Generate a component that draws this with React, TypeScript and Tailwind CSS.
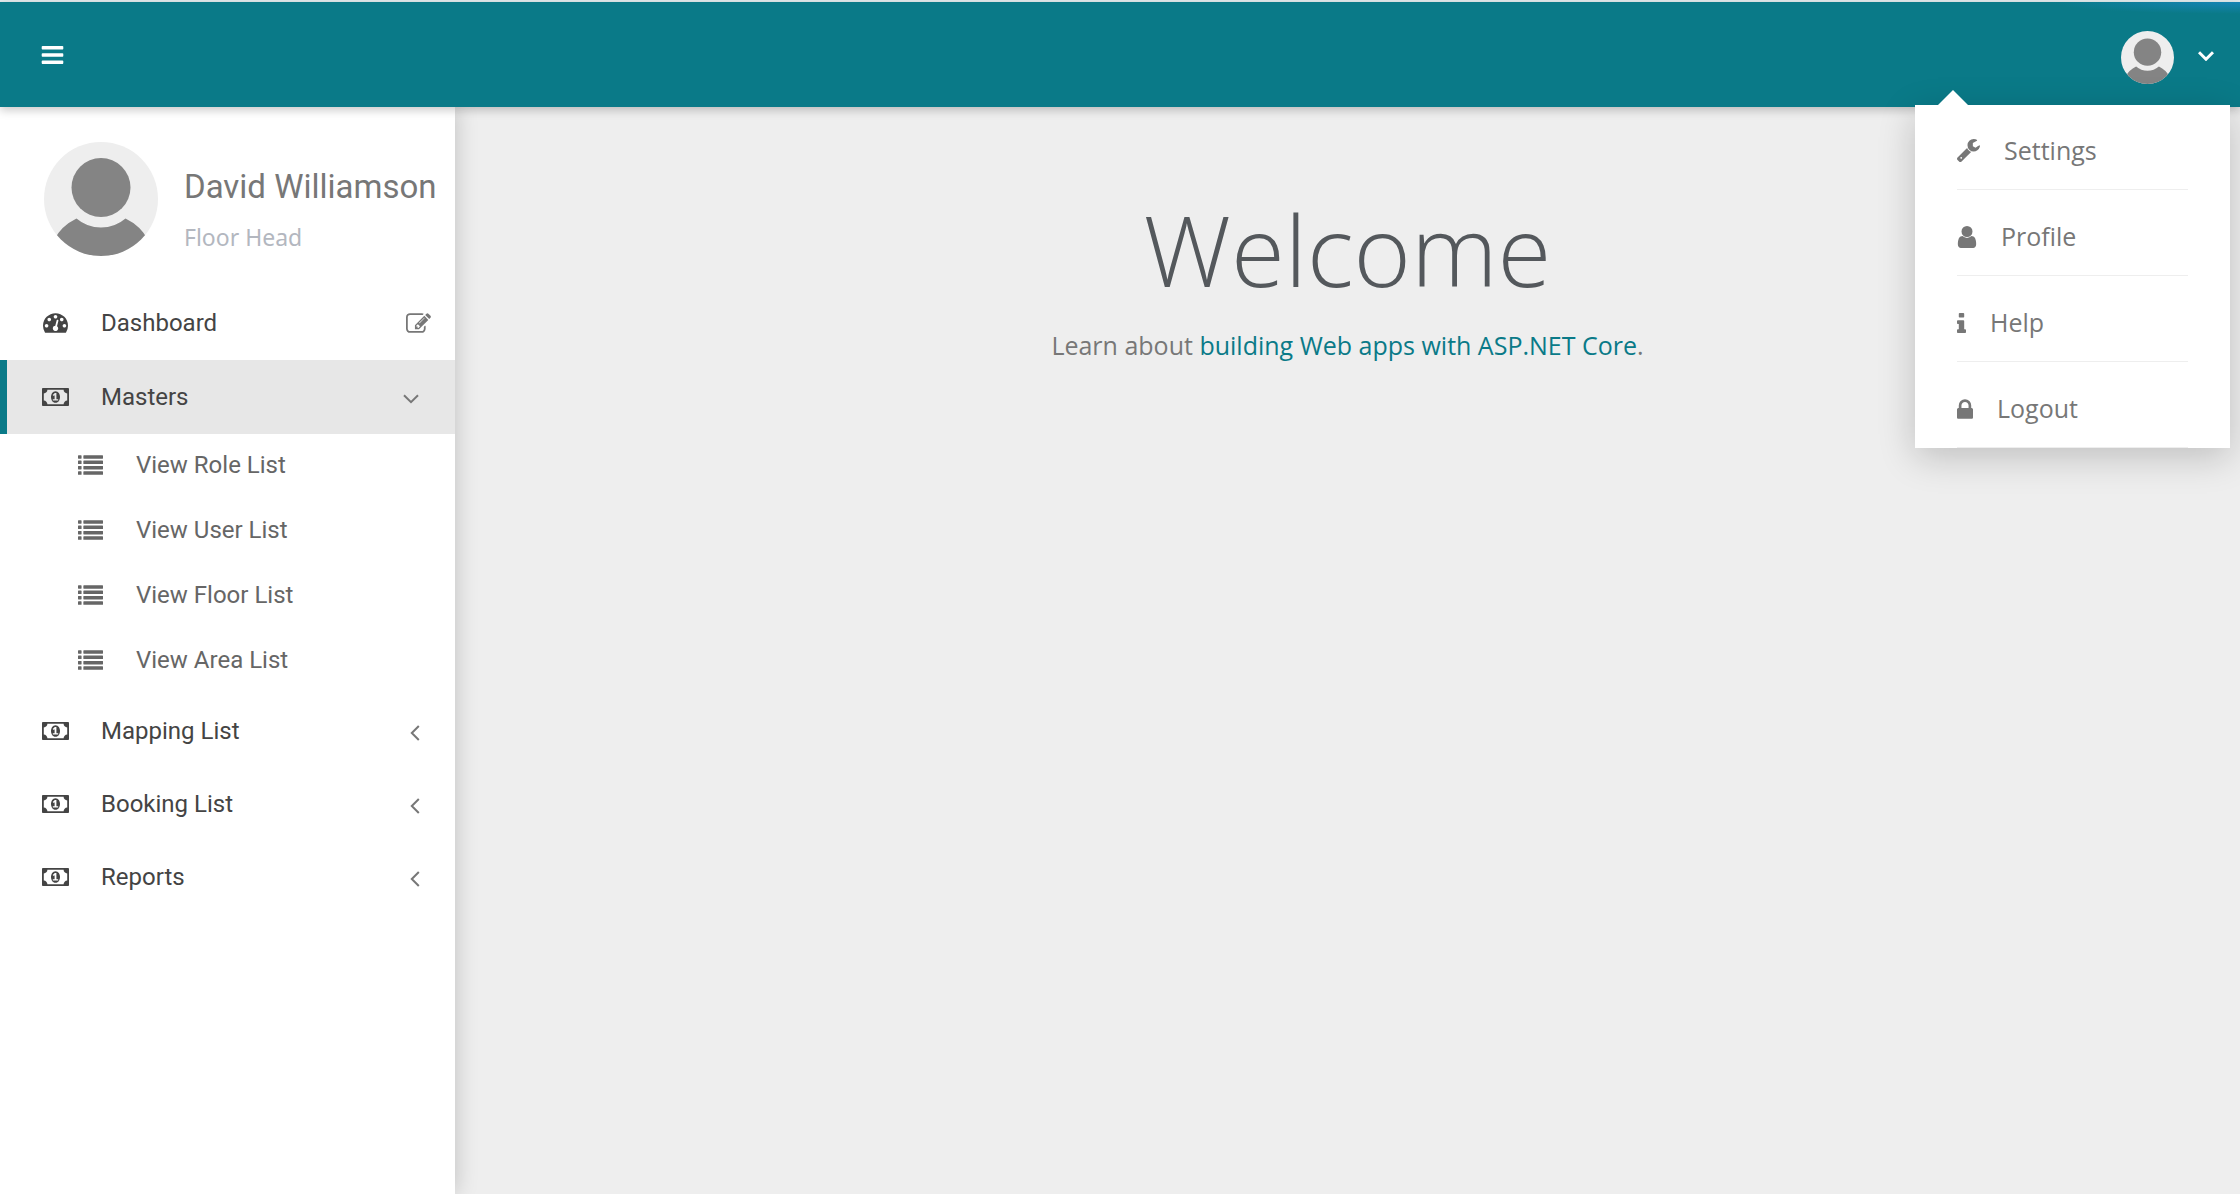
import React from "react";

type Glyph = { d: string; box: string };

const GLYPHS = {
  bars: {
    box: "128 256 1536 1280",
    d: "M1664 1344v128q0 26-19 45t-45 19h-1408q-26 0-45-19t-19-45v-128q0-26 19-45t45-19h1408q26 0 45 19t19 45zm0-512v128q0 26-19 45t-45 19h-1408q-26 0-45-19t-19-45v-128q0-26 19-45t45-19h1408q26 0 45 19t19 45zm0-512v128q0 26-19 45t-45 19h-1408q-26 0-45-19t-19-45v-128q0-26 19-45t45-19h1408q26 0 45 19t19 45z",
  },
  gauge: {
    box: "0 256 1792 1408",
    d: "M384 1152q0-53-37.5-90.5t-90.5-37.5-90.5 37.5-37.5 90.5 37.5 90.5 90.5 37.5 90.5-37.5 37.5-90.5zm192-448q0-53-37.5-90.5t-90.5-37.5-90.5 37.5-37.5 90.5 37.5 90.5 90.5 37.5 90.5-37.5 37.5-90.5zm428 481l101-382q6-26-7.5-48.5t-38.5-29.5-48 6.5-30 39.5l-101 382q-60 5-107 43.5t-63 98.5q-20 77 20 146t117 89 146-20 89-117q16-60-6-117t-72-91zm660-33q0-53-37.5-90.5t-90.5-37.5-90.5 37.5-37.5 90.5 37.5 90.5 90.5 37.5 90.5-37.5 37.5-90.5zm-640-640q0-53-37.5-90.5t-90.5-37.5-90.5 37.5-37.5 90.5 37.5 90.5 90.5 37.5 90.5-37.5 37.5-90.5zm448 192q0-53-37.5-90.5t-90.5-37.5-90.5 37.5-37.5 90.5 37.5 90.5 90.5 37.5 90.5-37.5 37.5-90.5zm320 448q0 261-141 483-19 29-54 29h-1402q-35 0-54-29-141-221-141-483 0-182 71-348t191-286 286-191 348-71 348 71 286 191 191 286 71 348z",
  },
  money: {
    box: "0 256 1920 1280",
    d: "M768 1152h384v-96h-128v-448h-114l-148 137 77 80q42-37 55-57h2v288h-128v96zm512-256q0 70-21 142t-59.5 134-101.5 101-138 39-138-39-101.5-101-59.5-134-21-142 21-142 59.5-134 101.5-101 138-39 138 39 101.5 101 59.5 134 21 142zm512 256v-512q-106 0-181-75t-75-181h-1152q0 106-75 181t-181 75v512q106 0 181 75t75 181h1152q0-106 75-181t181-75zm128-832v1152q0 26-19 45t-45 19h-1792q-26 0-45-19t-19-45v-1152q0-26 19-45t45-19h1792q26 0 45 19t19 45z",
  },
  list: {
    box: "0 128 1792 1408",
    d: "M32 128h192q32 0 32 32v192q0 32-32 32h-192q-32 0-32-32v-192q0-32 32-32zM416 128h1344q32 0 32 32v192q0 32-32 32h-1344q-32 0-32-32v-192q0-32 32-32zM32 512h192q32 0 32 32v192q0 32-32 32h-192q-32 0-32-32v-192q0-32 32-32zM416 512h1344q32 0 32 32v192q0 32-32 32h-1344q-32 0-32-32v-192q0-32 32-32zM32 896h192q32 0 32 32v192q0 32-32 32h-192q-32 0-32-32v-192q0-32 32-32zM416 896h1344q32 0 32 32v192q0 32-32 32h-1344q-32 0-32-32v-192q0-32 32-32zM32 1280h192q32 0 32 32v192q0 32-32 32h-192q-32 0-32-32v-192q0-32 32-32zM416 1280h1344q32 0 32 32v192q0 32-32 32h-1344q-32 0-32-32v-192q0-32 32-32z",
  },
  edit: {
    box: "0 128 1792 1408",
    d: "M888 1184l116-116-152-152-116 116v56h96v96h56zm440-720q-16-16-33 1l-350 350q-17 17-1 33t33-1l350-350q17-17 1-33zm80 594v190q0 119-84.5 203.5t-203.5 84.5h-832q-119 0-203.5-84.5t-84.5-203.5v-832q0-119 84.5-203.5t203.5-84.5h832q63 0 117 25 15 7 18 23 3 17-9 29l-49 49q-14 14-32 8-23-6-45-6h-832q-66 0-113 47t-47 113v832q0 66 47 113t113 47h832q66 0 113-47t47-113v-126q0-13 9-22l64-64q15-15 35-7t20 29zm-96-738l288 288-672 672h-288v-288zm444 132l-92 92-288-288 92-92q28-28 68-28t68 28l152 152q28 28 28 68t-28 68z",
  },
  wrench: {
    box: "85 128 1641 1643",
    d: "M448 1472q0-26-19-45t-45-19-45 19-19 45 19 45 45 19 45-19 19-45zm644-420l-682 682q-37 37-90 37-52 0-91-37l-106-108q-38-36-38-90 0-53 38-91l681-681q39 98 114.5 173.5t173.5 114.5zm634-435q0 39-23 106-47 134-164.5 217.5t-258.5 83.5q-185 0-316.5-131.5t-131.5-316.5 131.5-316.5 316.5-131.5q58 0 121.5 16.5t107.5 46.5q16 11 16 28t-16 28l-293 169v224l193 107q5-3 79-48.5t135.5-81 70.5-35.5q15 0 23.5 10t8.5 25z",
  },
  user: {
    box: "256 128 1280 1536",
    d: "M1536 1399q0 109-62.5 187t-150.5 78h-854q-88 0-150.5-78t-62.5-187q0-85 8.5-160.5t31.5-152 58.5-131 94-89 134.5-34.5q131 128 313 128t313-128q76 0 134.5 34.5t94 89 58.5 131 31.5 152 8.5 160.5zm-256-887q0 159-112.5 271.5t-271.5 112.5-271.5-112.5-112.5-271.5 112.5-271.5 271.5-112.5 271.5 112.5 112.5 271.5z",
  },
  info: {
    box: "576 128 640 1408",
    d: "M1216 1344v128q0 26-19 45t-45 19h-512q-26 0-45-19t-19-45v-128q0-26 19-45t45-19h64v-384h-64q-26 0-45-19t-19-45v-128q0-26 19-45t45-19h384q26 0 45 19t19 45v576h64q26 0 45 19t19 45zm-128-1152v192q0 26-19 45t-45 19h-256q-26 0-45-19t-19-45v-192q0-26 19-45t45-19h256q26 0 45 19t19 45z",
  },
  lock: {
    box: "320 128 1152 1408",
    d: "M640 768h512v-192q0-106-75-181t-181-75-181 75-75 181v192zm832 96v576q0 40-28 68t-68 28h-960q-40 0-68-28t-28-68v-576q0-40 28-68t68-28h32v-192q0-184 132-316t316-132 316 132 132 316v192h32q40 0 68 28t28 68z",
  },
} satisfies Record<string, Glyph>;

function Icon({ name, className }: { name: keyof typeof GLYPHS; className: string }) {
  const g = GLYPHS[name];
  return (
    <svg viewBox={g.box} className={`shrink-0 fill-current ${className}`} aria-hidden="true">
      <path d={g.d} />
    </svg>
  );
}

function Angle({ open, className }: { open: boolean; className: string }) {
  return (
    <svg
      viewBox={open ? "0 0 16 10" : "0 0 10 16"}
      className={`shrink-0 fill-none stroke-current ${open ? "h-[10px] w-[16px]" : "h-[16px] w-[10px]"} ${className}`}
      aria-hidden="true"
    >
      <path d={open ? "M1 1.2L8 8.2L15 1.2" : "M8.8 1L1.8 8L8.8 15"} />
    </svg>
  );
}

function Avatar({ id, className }: { id: string; className: string }) {
  return (
    <svg viewBox="0 0 114 114" className={`shrink-0 ${className}`} role="img" aria-label="User avatar">
      <clipPath id={id}>
        <circle cx="57" cy="57" r="57" />
      </clipPath>
      <circle cx="57" cy="57" r="57" fill="#eeeeee" />
      <circle cx="57" cy="45.5" r="29.5" fill="#848484" />
      <path
        clipPath={`url(#${id})`}
        fill="#848484"
        d="M10 98Q17 84 32.500 76.500Q43 85.500 57 85.500Q71 85.500 81.500 76.500Q97 84 104 98V114H10Z"
      />
    </svg>
  );
}

const SUB_ITEMS = ["View Role List", "View User List", "View Floor List", "View Area List"];
const GROUPS = ["Mapping List", "Booking List", "Reports"];
const MENU: { label: string; icon: keyof typeof GLYPHS; size: string }[] = [
  { label: "Settings", icon: "wrench", size: "size-[23px]" },
  { label: "Profile", icon: "user", size: "h-[22px] w-[20px]" },
  { label: "Help", icon: "info", size: "h-[20px] w-[9px]" },
  { label: "Logout", icon: "lock", size: "h-[20px] w-[16px]" },
];

function GroupButton({ label, open }: { label: string; open: boolean }) {
  return (
    <button
      type="button"
      aria-expanded={open}
      className={`flex w-full items-center border-l-[7px] pl-[35px] text-left text-[#444444] ${
        open ? "h-[74px] border-[#0a7a88] bg-[#e7e7e7] pr-9" : "h-[73px] border-transparent pr-[35px]"
      }`}
    >
      <Icon name="money" className="h-[18px] w-[27px]" />
      <span className="ml-8 flex-1">{label}</span>
      <Angle open={open} className="mt-1 stroke-2 text-[#777777]" />
    </button>
  );
}

function Sidebar() {
  return (
    <aside className="w-[455px] shrink-0 bg-white font-[Roboto,sans-serif] text-[24px] shadow-[0_0_22px_rgba(0,0,0,0.2)]">
      <div className="flex items-start gap-[26px] pt-[35px] pl-11">
        <Avatar id="profile-clip" className="size-[114px]" />
        <div className="pt-5 whitespace-nowrap">
          <h2 className="text-[33px] leading-[50px] text-[#777777]">David Williamson</h2>
          <p className="font-['Noto_Sans',sans-serif] text-[23px] leading-[50px] text-[#b3b7bf]">Floor Head</p>
        </div>
      </div>
      <nav className="mt-6">
        <div className="flex h-[74px] items-center pr-6 pl-[43px] text-[#444444]">
          <Icon name="gauge" className="h-[20px] w-[25px]" />
          <a href="#dashboard" className="ml-[33px] flex-1">
            Dashboard
          </a>
          <button type="button" aria-label="Edit dashboard" className="text-[#777777]">
            <Icon name="edit" className="h-[20px] w-[25px]" />
          </button>
        </div>
        <GroupButton label="Masters" open />
        <ul>
          {SUB_ITEMS.map((label) => (
            <li key={label}>
              <a href="#list" className="flex h-[65px] items-center pb-1 pl-[78px] text-[#666666]">
                <Icon name="list" className="h-[20px] w-[25px]" />
                <span className="ml-[33px]">{label}</span>
              </a>
            </li>
          ))}
        </ul>
        {GROUPS.map((label) => (
          <GroupButton key={label} label={label} open={false} />
        ))}
      </nav>
    </aside>
  );
}

function UserMenu() {
  return (
    <div className="absolute top-[103px] right-[10px] w-[315px] bg-white px-[42px] shadow-[0_9px_35px_rgba(0,0,0,0.2)]">
      <svg viewBox="0 0 30 15" className="absolute -top-[15px] left-[23px] h-[15px] w-[30px] fill-white" aria-hidden="true">
        <path d="M0 15L15 0L30 15Z" />
      </svg>
      <ul className="-mt-px">
        {MENU.map((item) => (
          <li key={item.label}>
            <a
              href="#menu"
              className="flex h-[86px] items-center gap-6 border-b border-[#eeeeee] pt-2 font-['Open_Sans',sans-serif] text-[25px] text-[#777777]"
            >
              <Icon name={item.icon} className={item.size} />
              {item.label}
            </a>
          </li>
        ))}
      </ul>
    </div>
  );
}

export default function App() {
  return (
    <div className="flex min-h-screen flex-col bg-[#eeeeee]">
      <div className="h-[2px] bg-[#e3ecee]" />
      <header className="relative z-10 flex h-[105px] items-center justify-between bg-[#0a7a88] pr-[26px] pl-[41px] shadow-[0_3px_9px_rgba(0,0,0,0.22)]">
        <div className="absolute top-0 right-0 h-3 w-48 bg-[radial-gradient(ellipse_at_top_right,#1584b4,transparent_70%)]" />
        <button type="button" aria-label="Toggle navigation" className="text-white">
          <Icon name="bars" className="h-[18px] w-[23px]" />
        </button>
        <button type="button" aria-label="Account menu" aria-expanded="true" className="flex items-center gap-6 pt-1.5 text-white">
          <Avatar id="account-clip" className="size-[53px]" />
          <Angle open className="mb-1 stroke-3" />
        </button>
        <UserMenu />
      </header>
      <div className="flex flex-1">
        <Sidebar />
        <main className="flex-1 pt-[83px] text-center font-['Open_Sans',sans-serif]">
          <h1 className="text-[98px] leading-[118px] font-light text-[#54585c]">Welcome</h1>
          <p className="mt-[18px] text-[25px] leading-[38px] text-[#777777]">
            Learn about{" "}
            <a href="#docs" className="text-[#0a7a88]">
              building Web apps with ASP.NET Core
            </a>
            .
          </p>
        </main>
      </div>
    </div>
  );
}
